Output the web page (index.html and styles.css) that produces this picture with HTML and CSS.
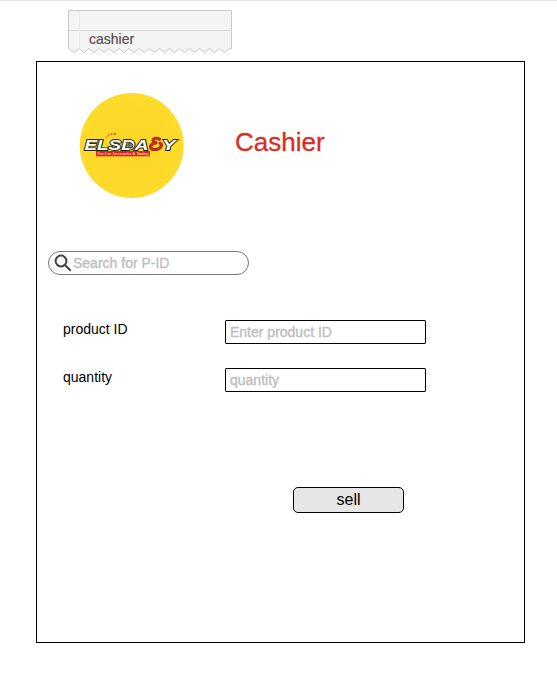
FILE: index.html
```
<!DOCTYPE html>
<html lang="en">
<head>
<meta charset="utf-8">
<title>Cashier</title>
<link rel="stylesheet" href="styles.css">
</head>
<body>
<div class="note">
  <svg class="note-paper" width="166" height="45" viewBox="0 0 166 45" aria-hidden="true">
    <path class="paper" d="M1.500 1.500H164.500V39.500H162.500L157.500 43.500L152.500 39.500L147.500 43.500L142.500 39.500L137.500 43.500L132.500 39.500L127.500 43.500L122.500 39.500L117.500 43.500L112.500 39.500L107.500 43.500L102.500 39.500L97.500 43.500L92.500 39.500L87.500 43.500L82.500 39.500L77 43.500L72 39.500L67 43.500L62 39.500L57 43.500L52 39.500L47 43.500L42 39.500L37 43.500L32 39.500L27 43.500L22 39.500L17 43.500L12 39.500L7 43.500L1.500 39.500Z"/>
    <path class="rule" d="M2 21.500H164"/>
    <path class="margin" d="M12.500 2V40"/>
  </svg>
  <span class="note-text">cashier</span>
</div>
<main class="frame">
  <header class="header">
    <svg class="logo" width="106" height="106" viewBox="79 93 106 106" role="img">
      <defs>
        <radialGradient id="disc" cx=".5" cy=".52" r=".55">
          <stop offset="0" stop-color="#fad526"/>
          <stop offset="1" stop-color="#fedc2b"/>
        </radialGradient>
      </defs>
      <ellipse cx="131.700" cy="145.500" rx="52" ry="52.500" fill="url(#disc)"/>
      <g fill="#e8761c">
        <circle cx="107" cy="137" r=".8"/><circle cx="108.500" cy="135" r="1"/>
        <circle cx="111.500" cy="134" r="1.200"/><circle cx="115" cy="134" r="1.300"/>
      </g>
      <rect x="96" y="151" width="54" height="5.300" fill="#d9251c"/>
      <text class="tagline" x="97.500" y="155.200" textLength="51" lengthAdjust="spacingAndGlyphs">For Car Accessories &amp; Tuning</text>
      <text class="brand" x="84.500" y="149.600" textLength="64" lengthAdjust="spacingAndGlyphs">ELSDA</text>
      <text class="brand" x="162" y="149.600" textLength="13.500" lengthAdjust="spacingAndGlyphs">Y</text>
      <circle cx="130.300" cy="145.700" r="2.600" fill="#777" stroke="#222" stroke-width=".7"/>
      <g class="accent">
        <path class="accent-edge" d="M159.500 139.200Q156.500 137.300 153.500 139.200Q151.800 141.500 156 142.800Q150.500 144.300 150.500 147Q151.500 150.500 157 149.300Q161.500 147.800 161.500 144.500L160 143"/>
        <path class="accent-fill" d="M159.500 139.200Q156.500 137.300 153.500 139.200Q151.800 141.500 156 142.800Q150.500 144.300 150.500 147Q151.500 150.500 157 149.300Q161.500 147.800 161.500 144.500L160 143"/>
      </g>
    </svg>
    <h1 class="title">Cashier</h1>
  </header>
  <label class="search">
    <svg width="20" height="20" viewBox="0 0 20 20" aria-hidden="true">
      <circle cx="8" cy="8" r="5.400"/><path d="M12 12L17.700 17.700"/>
    </svg>
    <input type="text" placeholder="Search for P-ID">
  </label>
  <form class="form">
    <div class="row">
      <label class="label" for="pid">product ID</label>
      <input class="field" id="pid" type="text" placeholder="Enter product ID">
    </div>
    <div class="row">
      <label class="label" for="qty">quantity</label>
      <input class="field" id="qty" type="text" placeholder="quantity">
    </div>
    <button class="sell" type="button">sell</button>
  </form>
</main>
</body>
</html>
```
FILE: styles.css
```
* { box-sizing: border-box; }
body {
  margin: 0;
  height: 698px;
  background: #fff;
  border-top: 1px solid #e4e4e4;
  font-family: "Liberation Sans", Arial, sans-serif;
  font-size: 14px;
  color: #000;
  overflow: hidden;
}
.note {
  display: grid;
  width: 166px;
  height: 45px;
  margin: 8px 0 0 67px;
}
.note > * { grid-area: 1 / 1; }
.note-paper { display: block; }
.paper { fill: #f4f4f4; stroke: #c8c8c8; }
.rule { stroke: #d6d6d6; }
.margin { stroke: #fbe3d2; }
.note-text {
  padding: 22px 0 0 22px;
  line-height: 16px;
  color: #554f4f;
  -webkit-text-stroke: .2px #554f4f;
}
.frame {
  width: 489px;
  height: 582px;
  margin: 7px 0 0 36px;
  border: 1px solid #000;
  padding: 31px 0 0 11px;
}
.header {
  display: flex;
  height: 106px;
  padding-left: 31px;
}
.logo { display: block; }
.title {
  margin: 34px 0 0 50px;
  font-size: 26px;
  line-height: 30px;
  font-weight: 400;
  color: #d92d1e;
  -webkit-text-stroke: .3px #d92d1e;
}
.brand {
  font-size: 15.500px;
  font-weight: 700;
  font-style: italic;
  fill: #fff;
  stroke: #222;
  stroke-width: 1.800px;
  paint-order: stroke;
}
.tagline {
  font-family: "Liberation Serif", serif;
  font-size: 4.500px;
  font-weight: 700;
  fill: #ffc4b0;
}
.accent path {
  fill: none;
  stroke-linecap: round;
  stroke-linejoin: round;
}
.accent-edge { stroke: #421a12; stroke-width: 3px; }
.accent-fill { stroke: #e32b1d; stroke-width: 2.100px; }
.search {
  display: flex;
  width: 201px;
  height: 24px;
  margin-top: 52px;
  border: 1px solid #777;
  border-radius: 12px;
  padding-left: 4px;
}
.search svg {
  flex: none;
  margin-top: 1px;
  fill: none;
  stroke: #444;
  stroke-width: 2;
}
.search input, .field {
  font: inherit;
  outline: 0;
  background: #fff;
}
.search input {
  width: 165px;
  height: 22px;
  border: 0;
  padding: 0;
  background: transparent;
}
input::placeholder {
  color: #bfbfbf;
  opacity: 1;
  -webkit-text-stroke: .4px #bfbfbf;
}
.form {
  display: flex;
  flex-direction: column;
  gap: 24px;
  margin: 45px 0 0 15px;
}
.row {
  display: grid;
  grid-template-columns: 162px 201px;
}
.label { line-height: 16px; padding-top: 1px; }
.field {
  width: 201px;
  height: 24px;
  border: 1px solid #000;
  border-radius: 1px;
  padding: 0 4px;
}
.sell {
  width: 111px;
  height: 26px;
  margin: 71px 0 0 230px;
  padding: 0;
  border: 1px solid #000;
  border-radius: 5px;
  background: #e6e6e6;
  font: 16px/24px "Liberation Sans", Arial, sans-serif;
  color: #000;
}
```
